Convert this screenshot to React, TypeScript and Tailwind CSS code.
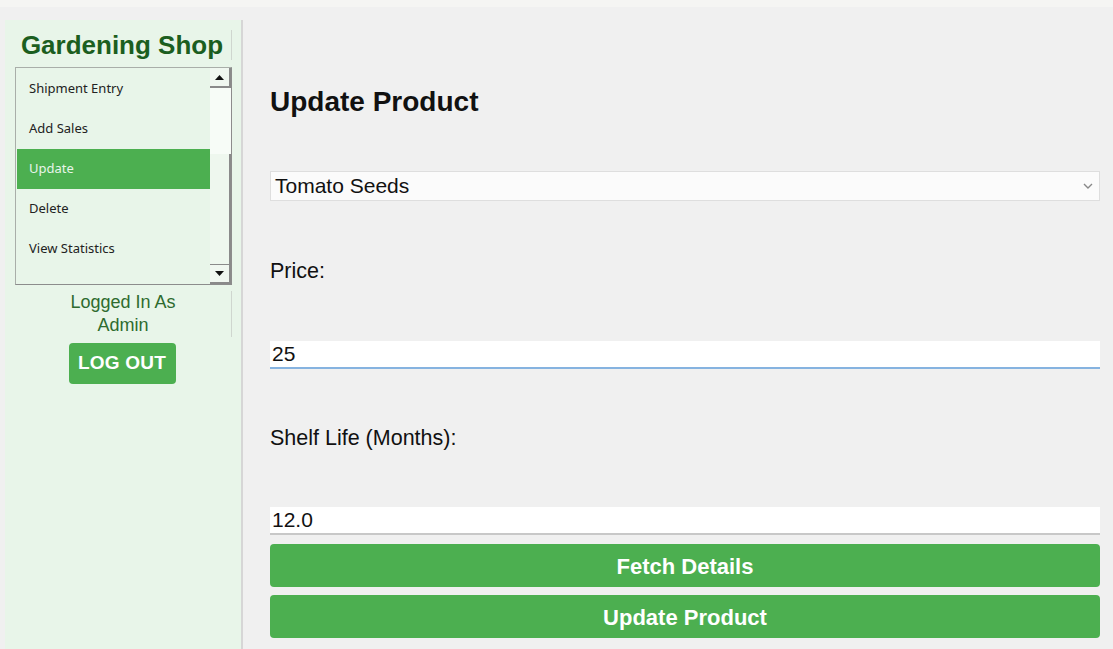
import { useState } from "react";

const MENU = ["Shipment Entry", "Add Sales", "Update", "Delete", "View Statistics"];

export default function App() {
  const [selected, setSelected] = useState("Update");
  const [price, setPrice] = useState("25");
  const [shelf, setShelf] = useState("12.0");

  return (
    <div className="w-[1113px] h-[649px] bg-[#f0f0f0] flex flex-col overflow-hidden font-['Liberation_Sans',Arial,sans-serif]">
      {/* window top strip */}
      <div className="h-[7px] bg-[#f5f5f3] shrink-0" />

      <div className="flex flex-1 pl-[5px] pt-[13px] min-h-0">
        {/* Sidebar */}
        <aside className="w-[238px] bg-[#e8f5e9] border-r-[2px] border-[#d6d6d6] flex flex-col">
          <div className="mt-[10px] mr-[9px] border-r border-[#cfd6cf] h-[30px] flex items-center justify-center">
            <h1 className="text-[26px] leading-[30px] font-bold text-[#1b5e20] pl-[8px]">Gardening Shop</h1>
          </div>

          {/* Listbox */}
          <div className="mt-[7px] ml-[10px] w-[217px] h-[218px] border border-[#a9aea9] border-r-[#8c8c8c] border-b-[#8c8c8c] flex">
            <ul className="flex-1 pt-[1px] pl-[1px] font-['Noto_Sans','Open_Sans',sans-serif] text-[13px]">
              {MENU.map((m) => (
                <li
                  key={m}
                  onClick={() => setSelected(m)}
                  className={`h-[40px] flex items-center pl-[12px] cursor-default ${
                    selected === m ? "bg-[#4caf50] text-[#e8f5e9]" : "text-[#222]"
                  }`}
                >
                  {m}
                </li>
              ))}
            </ul>
            {/* scrollbar */}
            <div className="w-[21px] flex flex-col">
              <div className="h-[20px] bg-[#f0f7f0] border-r-[2px] border-b-[2px] border-[#8a8a8a] flex items-center justify-center">
                <svg width="9" height="5" viewBox="0 0 9 5">
                  <path d="M0 5L4.5 0L9 5Z" fill="#111" />
                </svg>
              </div>
              <div className="h-[66px] bg-[#f7fcf7]" />
              <div className="flex-1 bg-[#eef7ee] border-r-[2px] border-[#8a8a8a]" />
              <div className="h-[20px] bg-[#f0f7f0] border-r-[2px] border-b-[2px] border-t border-[#8a8a8a] flex items-center justify-center">
                <svg width="9" height="5" viewBox="0 0 9 5">
                  <path d="M0 0L4.5 5L9 0Z" fill="#111" />
                </svg>
              </div>
            </div>
          </div>

          <div className="mt-[6px] mr-[9px] pl-[10px] border-r border-[#cfd6cf] text-center text-[18px] leading-[23px] text-[#2e6b2f]">
            <p>Logged In As</p>
            <p>Admin</p>
          </div>

          <div className="flex justify-center mt-[6px] pr-[2px]">
            <button className="w-[107px] h-[41px] bg-[#4caf50] rounded-[4px] text-white font-bold text-[19px] tracking-[0.2px]">
              LOG OUT
            </button>
          </div>
        </aside>

        {/* Main */}
        <main className="flex-1 pl-[27px] pr-[13px] flex flex-col">
          <h2 className="mt-[66px] text-[28px] leading-[32px] font-bold text-[#111]">Update Product</h2>

          <div className="mt-[53px] h-[30px] bg-[#fbfbfb] border border-[#dedede] flex items-center justify-between pl-[4px] pr-[6px]">
            <span className="text-[21px] text-[#111]">Tomato Seeds</span>
            <svg width="10" height="6" viewBox="0 0 10 6">
              <path d="M1 1L5 5L9 1" fill="none" stroke="#888" strokeWidth="1.4" />
            </svg>
          </div>

          <label className="mt-[57px] text-[21.5px] leading-[26px] text-[#111]">Price:</label>

          <input
            value={price}
            onChange={(e) => setPrice(e.target.value)}
            autoFocus
            className="mt-[57px] h-[28px] bg-white border-b-[2px] border-[#86b3e0] px-[2px] text-[21px] text-[#111] outline-none caret-[#111]"
          />

          <label className="mt-[56px] text-[21.5px] leading-[26px] text-[#111]">Shelf Life (Months):</label>

          <input
            value={shelf}
            onChange={(e) => setShelf(e.target.value)}
            className="mt-[56px] h-[28px] bg-white border-b-[2px] border-[#c8c8c8] px-[2px] text-[21px] text-[#111] outline-none"
          />

          <button className="mt-[9px] h-[43px] bg-[#4caf50] rounded-[4px] text-white font-bold text-[22px] pt-[2px]">
            Fetch Details
          </button>
          <button className="mt-[8px] h-[43px] bg-[#4caf50] rounded-[4px] text-white font-bold text-[22px] pt-[2px]">
            Update Product
          </button>
        </main>
      </div>
    </div>
  );
}
